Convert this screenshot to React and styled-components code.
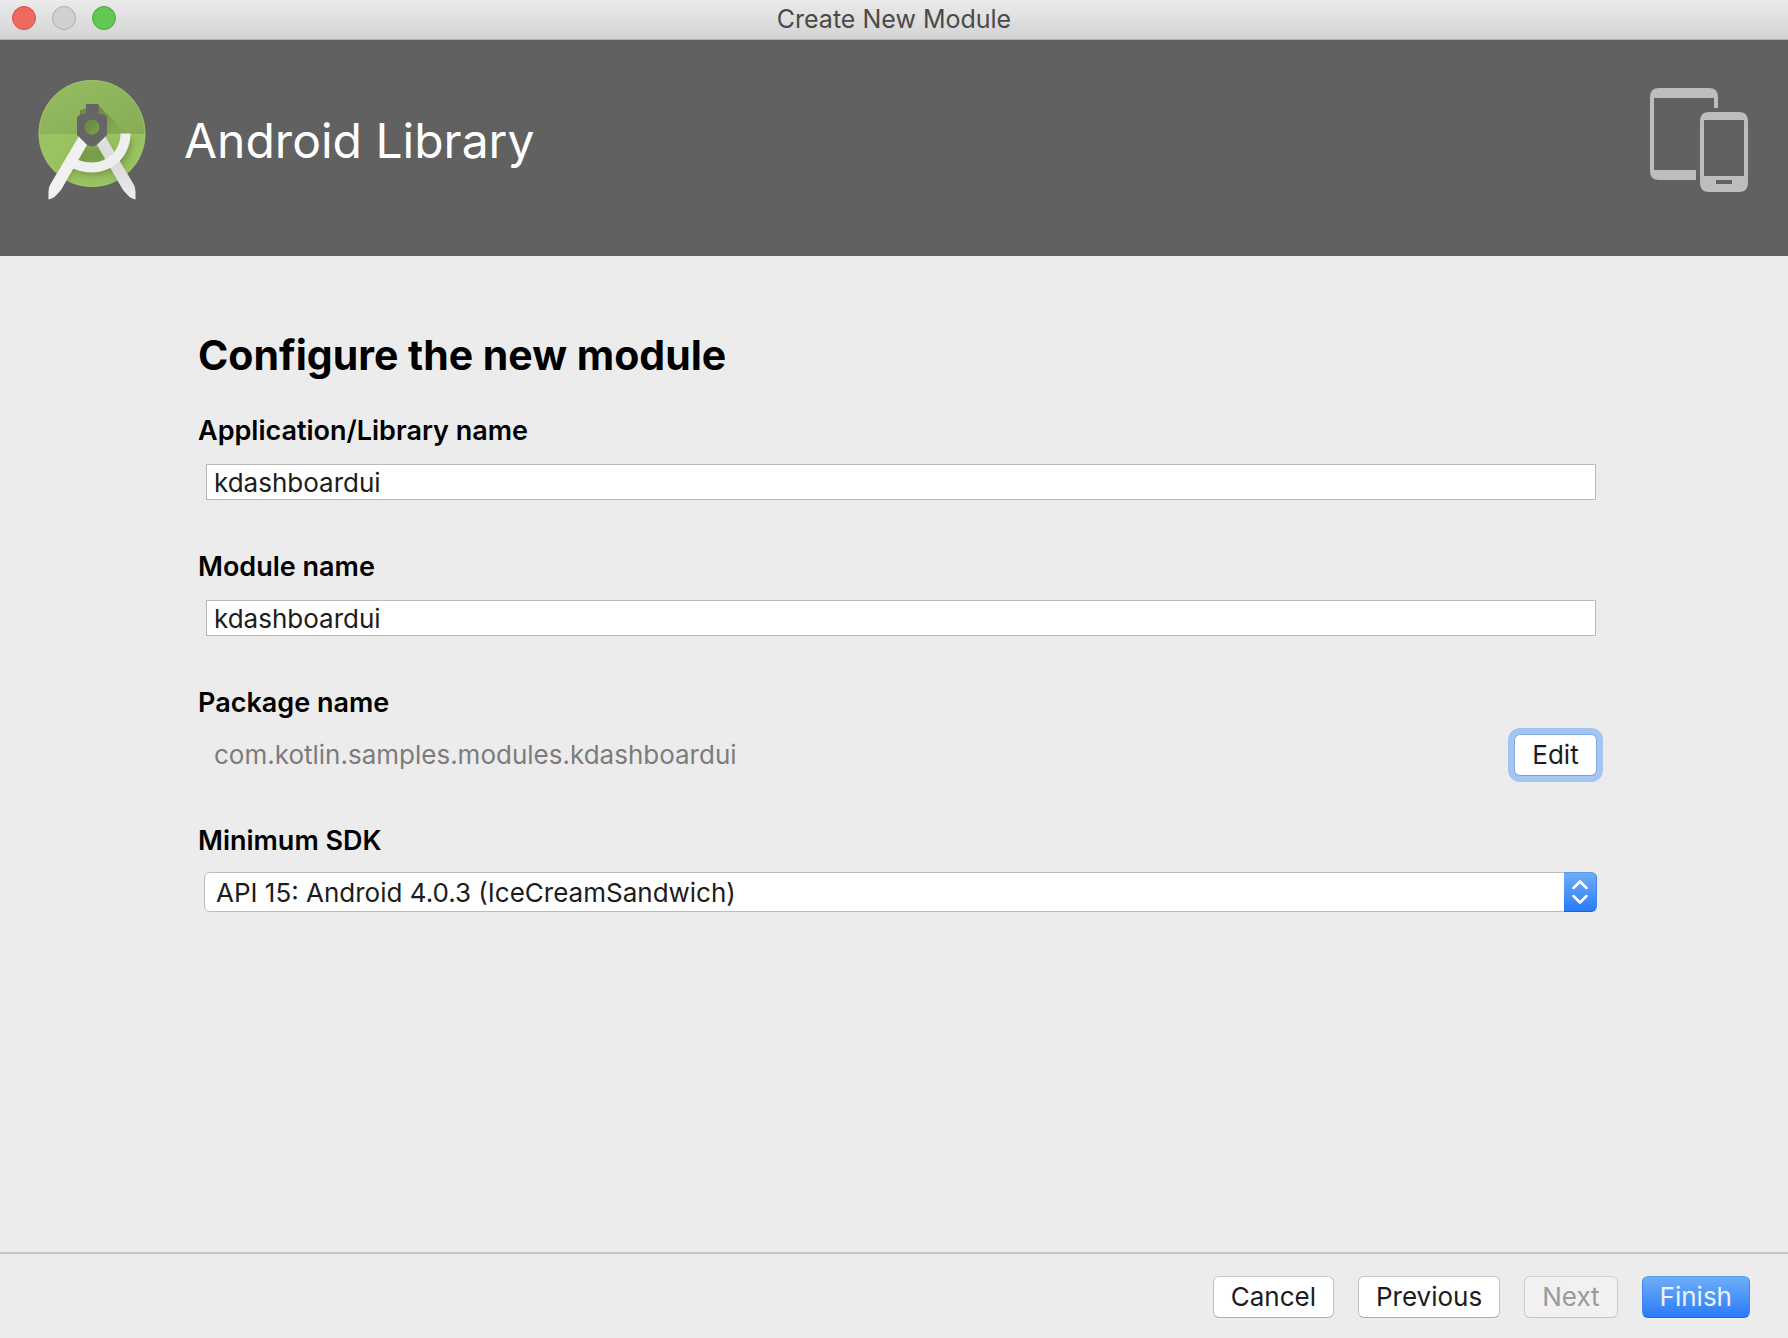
import React from 'react';
import styled, { createGlobalStyle, css } from 'styled-components';

const GlobalStyle = createGlobalStyle`
  *, *::before, *::after { box-sizing: border-box; }
  body { margin: 0; background: #ececec; }
  button, input, select { font: inherit; color: inherit; margin: 0; }
`;

const Window = styled.div`
  display: flex;
  flex-direction: column;
  min-height: 100vh;
  background: #ececec;
  color: #1c1c1c;
  font-family: Inter, 'Liberation Sans', sans-serif;
  font-size: 26px;
  line-height: 32px;
`;

const TitleBar = styled.div`
  display: grid;
  grid-template-columns: 1fr auto 1fr;
  align-items: start;
  height: 40px;
  padding: 0 12px;
  background: linear-gradient(#ebebeb, #d3d3d3);
  border-bottom: 1px solid #b1b1b1;
`;

const WindowTitle = styled.div`
  padding-top: 3px;
  color: #4a4a4a;
  font-size: 25px;
`;

const Lights = styled.div`
  display: flex;
  gap: 16px;
  padding-top: 6px;
`;

const Light = styled.button`
  width: 24px;
  height: 24px;
  padding: 0;
  border: 1px solid ${(p) => p.$edge};
  border-radius: 50%;
  background: ${(p) => p.$fill};
`;

const Banner = styled.header`
  display: flex;
  align-items: flex-start;
  height: 216px;
  padding: 40px 40px 0 36px;
  background: #616161;
  color: #fff;
`;

const BannerTitle = styled.h1`
  flex: 1;
  margin: 0;
  padding: 32px 0 0 36px;
  font-size: 48px;
  line-height: 58px;
  font-weight: 400;
`;

const DevicesIcon = styled.svg`
  margin-top: 8px;
`;

const Form = styled.main`
  flex: 1;
  padding: 76px 191px 48px 198px;
`;

const Heading = styled.h2`
  margin: 0 0 37px;
  color: #000;
  font-size: 41px;
  line-height: 46px;
  font-weight: 700;
`;

const Fields = styled.div`
  display: flex;
  flex-direction: column;
  gap: 49px;
`;

const Field = styled.div`
  display: flex;
  flex-direction: column;
  gap: 15px;
`;

const Label = styled.label`
  color: #000;
  font-size: 27px;
  font-weight: 600;
`;

const TextBox = styled.input`
  height: 36px;
  margin: 2px 1px 2px 8px;
  padding: 0 7px;
  border: 1px solid #b9b9b9;
  border-radius: 0;
  background: #fff;
  outline: none;
`;

const PackageRow = styled.div`
  display: flex;
  align-items: center;
  justify-content: space-between;
  padding-left: 16px;
`;

const PackageName = styled.output`
  color: #7c7c7c;
`;

const SelectBox = styled.div`
  position: relative;
  margin-left: 6px;
`;

const Select = styled.select`
  display: block;
  appearance: none;
  width: 100%;
  height: 40px;
  padding: 1px 48px 0 11px;
  border: 1px solid #bdbdbd;
  border-radius: 6px;
  background: #fff;
  outline: none;
`;

const Stepper = styled.span`
  position: absolute;
  top: 0;
  right: 0;
  bottom: 0;
  width: 33px;
  border: 1px solid #3f86ee;
  border-top-color: #559cf5;
  border-bottom-color: #1a63e6;
  border-left: 0;
  border-radius: 0 6px 6px 0;
  background: linear-gradient(#6eaef8, #2b7bf8);
  pointer-events: none;

  svg { display: block; margin: 7px auto 0; }
`;

const Footer = styled.footer`
  display: flex;
  justify-content: flex-end;
  gap: 24px;
  padding: 22px 38px 20px;
  border-top: 2px solid #c4c4c4;
`;

const looks = {
  plain: css`
    border-color: #c8c8c8 #c0c0c0 #acacac;
    background: #fff;
  `,
  focused: css`
    border-color: #84ade5 #84a8dc #7aa0d6;
    background: #fff;
    box-shadow: 0 0 0 6px #a3c5f2;
  `,
  disabled: css`
    border-color: #d2d2d2 #cdcdcd #c3c3c3;
    background: #f1f1f1;
    color: #9a9a9a;
  `,
  primary: css`
    border-color: #559cf5 #3f86ee #1a63e6;
    background: linear-gradient(#6eaef8, #2b7bf8);
    color: #edf2fc;
  `,
};

const Button = styled.button`
  min-width: 83px;
  height: 42px;
  padding: 0 17px;
  border: 1px solid;
  border-radius: 6px;
  outline: none;
  ${(p) => looks[p.$look || 'plain']}
`;

function StudioLogo() {
  return (
    <svg width="112" height="120" viewBox="0 0 112 120" aria-hidden="true">
      <defs>
        <linearGradient id="upper" x1="0" y1="0" x2="1" y2="1">
          <stop offset="0" stopColor="#97bd62" />
          <stop offset="1" stopColor="#86ad55" />
        </linearGradient>
        <linearGradient id="cast" gradientUnits="userSpaceOnUse" x1="56" y1="30" x2="84" y2="54">
          <stop offset="0.2" stopColor="#6a8d41" />
          <stop offset="1" stopColor="#83aa52" stopOpacity="0.4" />
        </linearGradient>
        <linearGradient id="leg" x1="0" y1="0" x2="0" y2="1">
          <stop offset="0" stopColor="#e2e2e2" />
          <stop offset="0.4" stopColor="#d9d9d9" />
          <stop offset="1" stopColor="#ededed" />
        </linearGradient>
        <filter id="soft" x="-20%" y="-20%" width="140%" height="140%">
          <feGaussianBlur stdDeviation="3" />
        </filter>
        <clipPath id="disc"><circle cx="56" cy="53.5" r="53.5" /></clipPath>
      </defs>
      <g clipPath="url(#disc)">
        <rect width="112" height="54" fill="url(#upper)" />
        <rect y="54" width="112" height="60" fill="#9ac261" />
        <path d="M62 25 L91 54 H44 V30 Z" fill="url(#cast)" />
        <g filter="url(#soft)" fill="none" stroke="#5d7f35" strokeOpacity="0.6">
          <path d="M48 62 L20 112 M66 62 L94 112" strokeWidth="9" />
          <path d="M37 85 Q56 96 78 86 Q91 76 92 58" strokeWidth="9" />
          <path d="M46 66 L66 66 L72 84 H39 Z" fill="#6f953f" stroke="none" fillOpacity="0.8" />
        </g>
      </g>
      <circle cx="56" cy="53.5" r="53" fill="none" stroke="#a5ca70" strokeOpacity="0.6" />
      <path d="M61 65 L69 56 L98 105 Q99.500 108 99.500 112 V119.500 Q95 119 92.500 116 L87 110 Z" fill="url(#leg)" />
      <path d="M38 78 Q47 82.500 56 82.500 C72 82.500 84.500 70 84.500 53.500 H94.500 C94.500 76 77 92.500 56 92.500 Q45 92.500 34.500 87.500 Z" fill="#efefef" />
      <path d="M43 56 L51 65 L25 110 L19.500 116 Q17 119 12.500 119.500 V112 Q12.500 108 14 105 Z" fill="#f1f1f1" />
      <path
        fillRule="evenodd"
        fill="#656565"
        d="M50 24 H62.500 V34 H66 Q71 35 71 39 V55 L60.500 65 Q56 68 51.500 65 L41 55 V39 Q41 35 46 34 H50 Z M56 39.500 A7.500 7.500 0 1 0 56 54.500 A7.500 7.500 0 1 0 56 39.500 Z"
      />
    </svg>
  );
}

function Devices() {
  return (
    <DevicesIcon width="98" height="104" viewBox="0 0 98 104" fill="#bdbdbd" aria-hidden="true">
      <path d="M9 0 H59 Q68 0 68 9 V20 H64 V10 H4 V82 H46 V92 H9 Q0 92 0 83 V9 Q0 0 9 0 Z" />
      <path
        fillRule="evenodd"
        d="M59 24 H89 Q98 24 98 33 V95 Q98 104 89 104 H59 Q50 104 50 95 V33 Q50 24 59 24 Z M54 32 V88 H94 V32 Z M66 92 V96 H82 V92 Z"
      />
    </DevicesIcon>
  );
}

export default function App() {
  return (
    <Window>
      <GlobalStyle />
      <TitleBar>
        <Lights>
          <Light type="button" aria-label="Close" $fill="#ee6a5f" $edge="#d5504a" />
          <Light type="button" aria-label="Minimize" $fill="#d0d0d0" $edge="#b0b0b0" />
          <Light type="button" aria-label="Zoom" $fill="#62c655" $edge="#4ba73f" />
        </Lights>
        <WindowTitle>Create New Module</WindowTitle>
      </TitleBar>
      <Banner>
        <StudioLogo />
        <BannerTitle>Android Library</BannerTitle>
        <Devices />
      </Banner>
      <Form>
        <Heading>Configure the new module</Heading>
        <Fields>
          <Field>
            <Label htmlFor="app-name">Application/Library name</Label>
            <TextBox id="app-name" type="text" defaultValue="kdashboardui" />
          </Field>
          <Field>
            <Label htmlFor="module-name">Module name</Label>
            <TextBox id="module-name" type="text" defaultValue="kdashboardui" />
          </Field>
          <Field>
            <Label htmlFor="package-name">Package name</Label>
            <PackageRow>
              <PackageName id="package-name">com.kotlin.samples.modules.kdashboardui</PackageName>
              <Button type="button" $look="focused">Edit</Button>
            </PackageRow>
          </Field>
          <Field>
            <Label htmlFor="min-sdk">Minimum SDK</Label>
            <SelectBox>
              <Select id="min-sdk" defaultValue="15">
                <option value="15">API 15: Android 4.0.3 (IceCreamSandwich)</option>
              </Select>
              <Stepper>
                <svg width="16" height="24" viewBox="0 0 16 24" fill="none" stroke="#fff" strokeWidth="2.500" strokeLinecap="round" strokeLinejoin="round">
                  <path d="M1.500 8 L8 1.500 L14.500 8 M1.500 16 L8 22.500 L14.500 16" />
                </svg>
              </Stepper>
            </SelectBox>
          </Field>
        </Fields>
      </Form>
      <Footer>
        <Button type="button">Cancel</Button>
        <Button type="button">Previous</Button>
        <Button type="button" $look="disabled" disabled>Next</Button>
        <Button type="button" $look="primary">Finish</Button>
      </Footer>
    </Window>
  );
}
